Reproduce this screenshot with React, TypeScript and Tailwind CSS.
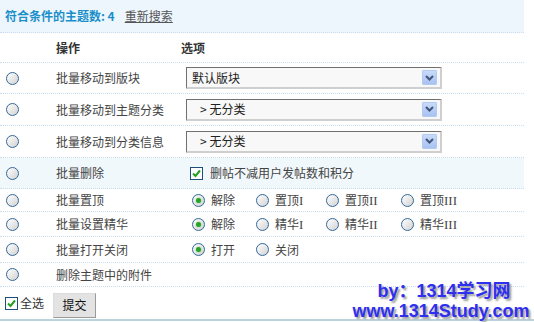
import React from 'react'

function Radio({ checked = false }: { checked?: boolean }) {
  return (
    <span className="relative inline-flex w-[13px] h-[13px] shrink-0 items-center justify-center rounded-full border border-[#33679a] bg-linear-to-br from-white to-[#d2d2d2]">
      {checked && <span className="w-[5px] h-[5px] rounded-full bg-[#27a327] shadow-[0_0_2px_#7fd07f]" />}
    </span>
  )
}

function Checkbox() {
  return (
    <span className="inline-flex w-[13px] h-[13px] shrink-0 items-center justify-center border border-[#1d4e7d] bg-white">
      <svg width="9" height="9" viewBox="0 0 9 9">
        <path d="M1 4.5 L3.5 7 L8 1.5" fill="none" stroke="#22a022" strokeWidth="2" />
      </svg>
    </span>
  )
}

function Select({ value }: { value: string }) {
  return (
    <div className="flex items-center w-[256px] h-[22px] border-t border-l border-t-[#707070] border-l-[#707070] border-b-2 border-r-2 border-b-[#cfcfcf] border-r-[#cfcfcf] bg-[#f8f8f8] pl-[5px] pr-[3px]">
      <span className="flex-1 whitespace-pre text-[#222]">{value}</span>
      <span className="flex w-[15px] h-[15px] items-center justify-center rounded-[1px] border border-[#b3c9ef] bg-linear-to-b from-[#c9dafa] to-[#a8c2f2]">
        <svg width="9" height="6" viewBox="0 0 9 6">
          <path d="M1 1 L4.5 4.5 L8 1" fill="none" stroke="#42557a" strokeWidth="2" />
        </svg>
      </span>
    </div>
  )
}

function Row({ label, h, bg = '', children }: { label: string; h: string; bg?: string; children?: React.ReactNode }) {
  return (
    <div className={`flex items-center border-b border-dotted border-[#c8def0] ${h} ${bg}`}>
      <div className="w-[56px] pl-[6px] flex items-center">
        <Radio />
      </div>
      <div className="w-[125px] text-[#444]">{label}</div>
      <div className="flex items-center">{children}</div>
    </div>
  )
}

function Opt({ label, num = '', checked = false, w }: { label: string; num?: string; checked?: boolean; w: string }) {
  return (
    <div className={`flex items-center gap-[6px] ${w}`}>
      <Radio checked={checked} />
      <span className="text-[#444]">
        {label}
        {num && <span style={{ fontFamily: '"Liberation Serif", serif' }} className="text-[13px]">{num}</span>}
      </span>
    </div>
  )
}

export default function App() {
  return (
    <div
      className="relative w-[534px] h-[322px] bg-white overflow-hidden text-[12px] leading-[16px]"
      style={{ fontFamily: '"Noto Sans CJK SC", "Liberation Sans", sans-serif' }}
    >
      <div className="w-[524px]">
        {/* title bar */}
        <div className="flex items-center h-[33px] pl-[5px] border-b border-dotted border-[#c8def0] bg-[#eef6fd]">
          <span className="font-bold text-[#1a8fca]">符合条件的主题数: 4</span>
          <span className="ml-[10px] text-[#555] underline">重新搜索</span>
        </div>

        {/* column heads */}
        <div className="flex items-center h-[30px] border-b border-dotted border-[#c8def0] font-bold text-[#333]">
          <div className="w-[56px]" />
          <div className="w-[125px]">操作</div>
          <div>选项</div>
        </div>

        <Row label="批量移动到版块" h="h-[31px]">
          <div className="pl-[5px]"><Select value="默认版块" /></div>
        </Row>
        <Row label="批量移动到主题分类" h="h-[32px]">
          <div className="pl-[5px]"><Select value="   > 无分类" /></div>
        </Row>
        <Row label="批量移动到分类信息" h="h-[32px]">
          <div className="pl-[5px]"><Select value="   > 无分类" /></div>
        </Row>
        <Row label="批量删除" h="h-[31px]" bg="bg-[#f1f8fc]">
          <div className="pl-[9px] flex items-center gap-[7px]">
            <Checkbox />
            <span className="text-[#444]">删帖不减用户发帖数和积分</span>
          </div>
        </Row>
        <Row label="批量置顶" h="h-[23px]">
          <div className="pl-[11px] flex items-center">
            <Opt label="解除" checked w="w-[64px]" />
            <Opt label="置顶" num="I" w="w-[70px]" />
            <Opt label="置顶" num="II" w="w-[75px]" />
            <Opt label="置顶" num="III" w="w-[70px]" />
          </div>
        </Row>
        <Row label="批量设置精华" h="h-[25px]">
          <div className="pl-[11px] flex items-center">
            <Opt label="解除" checked w="w-[64px]" />
            <Opt label="精华" num="I" w="w-[70px]" />
            <Opt label="精华" num="II" w="w-[75px]" />
            <Opt label="精华" num="III" w="w-[70px]" />
          </div>
        </Row>
        <Row label="批量打开关闭" h="h-[26px]">
          <div className="pl-[11px] flex items-center">
            <Opt label="打开" checked w="w-[64px]" />
            <Opt label="关闭" w="w-[70px]" />
          </div>
        </Row>
        <Row label="删除主题中的附件" h="h-[24px]" />
      </div>

      {/* footer */}
      <div className="flex items-center h-[34px] pl-[5px] border-b-2 border-[#bfd3dc]">
        <Checkbox />
        <span className="ml-[2px] text-[#333]">全选</span>
        <button className="ml-[9px] mt-[4px] w-[43px] h-[25px] border border-[#9a9a9a] border-t-[#dcdcdc] border-l-[#dcdcdc] bg-[#e3e3e3] text-[#111]">
          提交
        </button>
      </div>

      {/* watermark */}
      <div
        className="absolute left-[350px] top-[281px] w-[182px] text-center font-bold text-[18px] leading-[20px] text-[#2f2ff0] [text-shadow:2px_2px_2px_#9a9a9a]"
        style={{ fontFamily: '"Liberation Sans", "Noto Sans CJK SC", sans-serif' }}
      >
        <div className="h-[20px] pl-[6px] whitespace-nowrap">by：1314学习网</div>
        <div className="h-[20px] whitespace-nowrap">www.1314Study.com</div>
      </div>
    </div>
  )
}
